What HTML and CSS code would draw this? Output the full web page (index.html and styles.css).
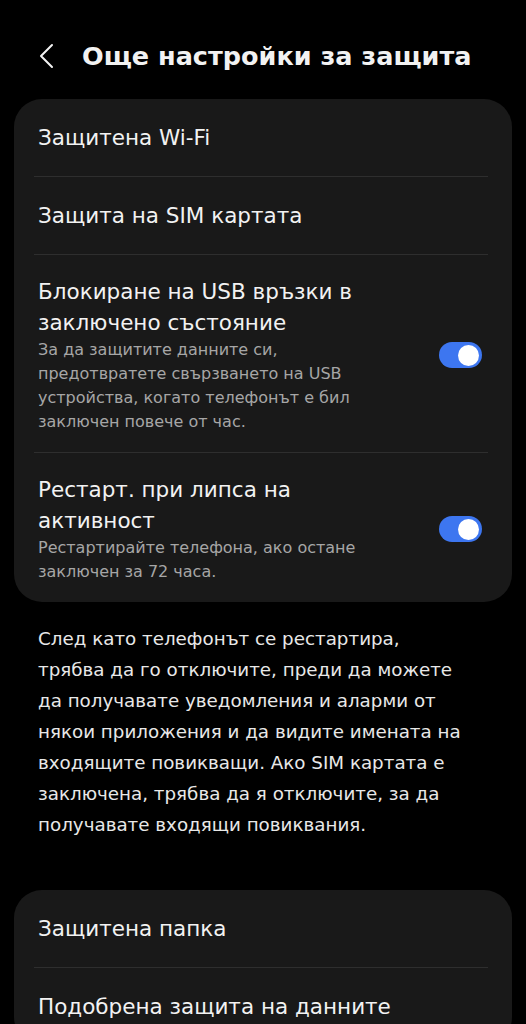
FILE: index.html
```html
<!DOCTYPE html>
<html lang="bg">
<head>
  <meta charset="UTF-8" />
  <meta name="viewport" content="width=device-width, initial-scale=1" />
  <title>Още настройки за защита</title>
  <link rel="stylesheet" href="styles.css">
</head>
<body>
  <div class="screen">
    <header class="topbar">
      <button class="back-btn" aria-label="Назад">
        <svg width="16" height="26" viewBox="0 0 16 26">
          <path d="M13 2 L2 13 L13 24" fill="none" stroke="#f2f2f2" stroke-width="2" stroke-linecap="round" stroke-linejoin="round"/>
        </svg>
      </button>
      <h1>Още настройки за защита</h1>
    </header>

    <section class="card">
      <div class="row">
        <div class="row-text">
          <div class="row-title">Защитена Wi-Fi</div>
        </div>
      </div>
      <div class="row">
        <div class="row-text">
          <div class="row-title">Защита на SIM картата</div>
        </div>
      </div>
      <div class="row tall">
        <div class="row-text">
          <div class="row-title">Блокиране на USB връзки в заключено състояние</div>
          <div class="row-sub">За да защитите данните си, предотвратете свързването на USB устройства, когато телефонът е бил заключен повече от час.</div>
        </div>
        <span class="toggle on"><span class="knob"></span></span>
      </div>
      <div class="row tall">
        <div class="row-text">
          <div class="row-title">Рестарт. при липса на активност</div>
          <div class="row-sub">Рестартирайте телефона, ако остане заключен за 72 часа.</div>
        </div>
        <span class="toggle on"><span class="knob"></span></span>
      </div>
    </section>

    <p class="note">След като телефонът се рестартира, трябва да го отключите, преди да можете да получавате уведомления и аларми от някои приложения и да видите имената на входящите повикващи. Ако SIM картата е заключена, трябва да я отключите, за да получавате входящи повиквания.</p>

    <section class="card">
      <div class="row">
        <div class="row-text">
          <div class="row-title">Защитена папка</div>
        </div>
      </div>
      <div class="row">
        <div class="row-text">
          <div class="row-title">Подобрена защита на данните</div>
        </div>
      </div>
    </section>
  </div>
</body>
</html>
```

FILE: styles.css
```css
:root {
  --bg: #000;
  --card-bg: #191919;
  --divider: #2e2e2e;
  --text-main: #f2f2f2;
  --text-muted: #a6a6a6;
  --accent: #3d76f0;
  --radius: 28px;
}
body {
  margin: 0;
  background: var(--bg);
  color: var(--text-main);
  font-family: "DejaVu Sans", "Noto Sans", sans-serif;
  height: 1024px;
  overflow: hidden;
}
.screen {
  padding: 0 14px;
}
.topbar {
  display: flex;
  align-items: center;
  height: 99px;
  padding: 13px 0 0 25px;
  box-sizing: border-box;
  gap: 27px;
}
.back-btn {
  background: none;
  border: none;
  padding: 0;
  display: flex;
}
.topbar h1 {
  margin: 0;
  font-size: 25.5px;
  font-weight: 700;
  letter-spacing: 0;
}
.card {
  background: var(--card-bg);
  border-radius: var(--radius);
  padding: 0 24px 0 20px;
}
.row {
  display: flex;
  align-items: center;
  gap: 40px;
  min-height: 77px;
  border-bottom: 1px solid var(--divider);
}
.row:last-child {
  border-bottom: none;
}
.row.tall {
  padding: 21px 0 18px;
}
.row-text {
  flex: 1;
  padding-left: 4px;
}
.row-title {
  font-size: 21.5px;
  line-height: 31px;
}
.row-sub {
  font-size: 16px;
  line-height: 24px;
  color: var(--text-muted);
}
.toggle {
  width: 43px;
  height: 26px;
  border-radius: 13px;
  background: #444;
  display: flex;
  align-items: center;
  padding: 0 3px;
  margin-right: 6px;
  box-sizing: border-box;
  flex-shrink: 0;
}
.toggle.on {
  background: var(--accent);
  justify-content: flex-end;
}
.knob {
  width: 21px;
  height: 21px;
  border-radius: 50%;
  background: #fff;
}
.note {
  margin: 0;
  padding: 21px 44px 50px 24px;
  font-size: 18.3px;
  line-height: 31px;
  color: #e8e8e8;
}
```
